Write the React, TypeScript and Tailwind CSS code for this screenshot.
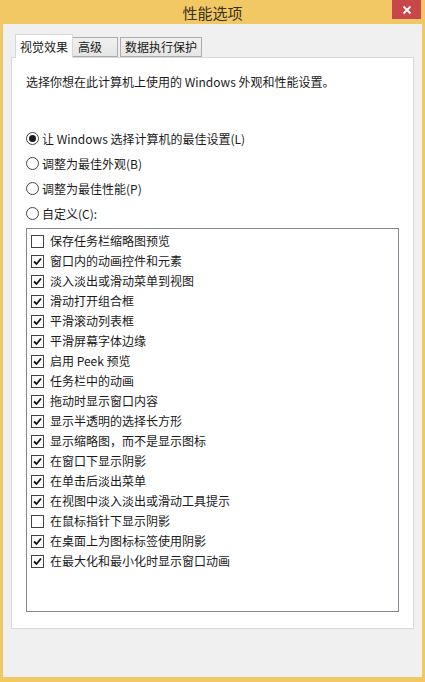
import React from "react";

const items: [string, boolean][] = [
  ["保存任务栏缩略图预览", false],
  ["窗口内的动画控件和元素", true],
  ["淡入淡出或滑动菜单到视图", true],
  ["滑动打开组合框", true],
  ["平滑滚动列表框", true],
  ["平滑屏幕字体边缘", true],
  ["启用 Peek 预览", true],
  ["任务栏中的动画", true],
  ["拖动时显示窗口内容", true],
  ["显示半透明的选择长方形", true],
  ["显示缩略图，而不是显示图标", true],
  ["在窗口下显示阴影", true],
  ["在单击后淡出菜单", true],
  ["在视图中淡入淡出或滑动工具提示", true],
  ["在鼠标指针下显示阴影", false],
  ["在桌面上为图标标签使用阴影", true],
  ["在最大化和最小化时显示窗口动画", true],
];

const radios: [string, boolean][] = [
  ["让 Windows 选择计算机的最佳设置(L)", true],
  ["调整为最佳外观(B)", false],
  ["调整为最佳性能(P)", false],
  ["自定义(C):", false],
];

function Radio({ on }: { on: boolean }) {
  return (
    <div className="w-[13px] h-[13px] rounded-full border border-[#444] bg-white flex items-center justify-center shrink-0">
      {on && <div className="w-[7px] h-[7px] rounded-full bg-[#1a1a1a]" />}
    </div>
  );
}

function Check({ on }: { on: boolean }) {
  return (
    <div className="w-[13px] h-[13px] border border-[#444] bg-white flex items-center justify-center shrink-0">
      {on && (
        <svg width="9" height="9" viewBox="0 0 9 9">
          <path d="M1 4.5 L3.5 7 L8 1.5" fill="none" stroke="#111" strokeWidth="1.8" />
        </svg>
      )}
    </div>
  );
}

export default function App() {
  return (
    <div
      className="w-[425px] h-[682px] bg-[#f1c864] flex flex-col text-[12px] text-[#1a1a1a]"
      style={{ fontFamily: '"Noto Sans CJK SC", "Noto Sans", sans-serif' }}
    >
      <div className="h-[24px] relative flex items-center justify-center shrink-0">
        <span className="text-[15px] text-[#3a3020] leading-none">性能选项</span>
        <div className="absolute right-[4px] top-0 w-[29px] h-[19px] bg-[#c9464a] flex items-center justify-center">
          <svg width="10" height="10" viewBox="0 0 10 10">
            <path d="M1.5 1.5 L8.5 8.5 M8.5 1.5 L1.5 8.5" stroke="#fff" strokeWidth="1.8" />
          </svg>
        </div>
      </div>
      <div className="flex-1 ml-[3px] mr-[3px] mb-[5px] bg-[#f0f0f0] flex flex-col pt-[10px] px-[8px]">
        <div className="flex items-end h-[23px] relative z-10 pl-[4px]">
          <div className="h-[24px] -mb-[1px] bg-white border border-[#d9d9d9] border-b-0 flex items-center w-[58px] justify-center leading-none">
            视觉效果
          </div>
          <div className="h-[20px] bg-gradient-to-b from-[#f0f0f0] to-[#e5e5e5] border border-[#acacac] border-l-0 flex items-center w-[45px] px-[5px] leading-none">
            高级
          </div>
          <div className="h-[20px] ml-[2px] bg-gradient-to-b from-[#f0f0f0] to-[#e5e5e5] border border-[#acacac] flex items-center w-[82px] justify-center leading-none">
            数据执行保护
          </div>
        </div>
        <div className="h-[572px] bg-white border border-[#d9d9d9] px-[14px] flex flex-col">
          <div className="h-[48px] flex items-center leading-none">
            选择你想在此计算机上使用的 Windows 外观和性能设置。
          </div>
          <div className="h-[20px]" />
          <div className="flex flex-col">
            {radios.map(([t, on]) => (
              <div key={t} className="h-[25px] flex items-center gap-[3px] leading-none">
                <Radio on={on} />
                <span>{t}</span>
              </div>
            ))}
          </div>
          <div className="h-[384px] mt-[2px] border border-[#828790] flex flex-col pt-[2px]">
            {items.map(([t, on]) => (
              <div key={t} className="h-[20px] flex items-center pl-[4px] gap-[6px] leading-none">
                <Check on={on} />
                <span>{t}</span>
              </div>
            ))}
          </div>
        </div>
      </div>
    </div>
  );
}
